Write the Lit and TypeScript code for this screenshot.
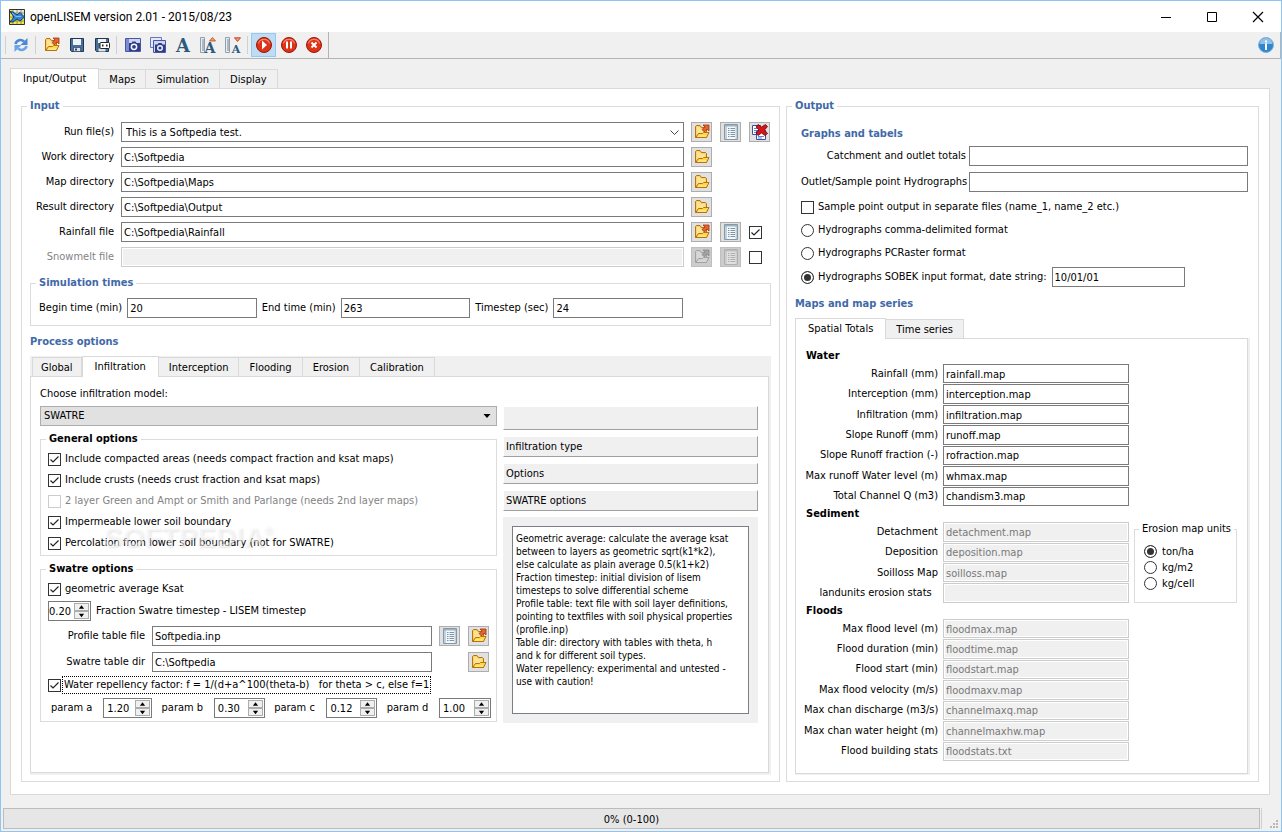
import { LitElement, html, css, svg, nothing, TemplateResult } from "lit";
import { customElement } from "lit/decorators.js";
import { classMap } from "lit/directives/class-map.js";

const folder = svg`
  <path d="M1.500 13.500v-11l1-1h3.500l1.500 2h4l1 1v9z" fill="#f5c64a" stroke="#b9720c"/>
  <path d="M2.500 3.500 3 2.500h2.500L7 4.500h4.500V9h-7l-2 2.500z" fill="#fce294"/>
  <path d="M1.800 13.500 4.500 9.500h4l1-1h5.500l-2.500 5z" fill="#ffd84a" stroke="#b9720c"/>
  <path d="M4 12h8" stroke="#fff0a8" fill="none"/>`;

const ruler = svg`
  <path d="M.500.500h4v15h-4z" fill="#e9eef2" stroke="#8fa1b0"/>
  <path d="M2 3h2M2 5h2M2 7h2M2 9h2M2 11h2M2 13h2" stroke="#6f8596"/>`;

const disc = svg`
  <circle cx="8" cy="8" r="7.500" fill="#dd3316" stroke="#9d1408"/>
  <path d="M2.500 6.500a5.600 5.200 0 0 1 11 0" fill="none" stroke="#f5876c" stroke-width="1.200"/>`;

const glyphs: Record<string, TemplateResult> = {
  app: svg`
    <rect width="16" height="16" fill="#f2e64a"/>
    <path d="M4 0h12v8H4z" fill="#e6e8e6"/>
    <path d="M0 4h16M0 8h16M0 12h16M4 0v16M8 0v16M12 0v16" stroke="#77763c" stroke-width=".7"/>
    <path d="M.500.500h15v15H.500z" fill="none" stroke="#33352c"/>
    <path d="M1 2.500 4 3l4 3 3-2.500 4.500 4.500-4.500 4-3-2-4 3H1l4-5z" fill="#2f86d6" stroke="#123c74"/>
    <path d="m3 4 4 3.500h5" fill="none" stroke="#7fbdf0"/>`,
  refresh: svg`
    <path d="M2.500 7C3.500 3 8 1.800 11 4.500" fill="none" stroke="#4b87d2" stroke-width="2.600"/>
    <path d="M14.500 1v7H7.500z" fill="#4b87d2"/>
    <path d="M13.500 9C12.500 13 8 14.200 5 11.500" fill="none" stroke="#6ba3e6" stroke-width="2.600"/>
    <path d="M1.500 15V8h7z" fill="#6ba3e6"/>`,
  folder,
  open: svg`${folder}
    <path d="M9 1h6v6l-2-2-2.500 3L8 5.500 11 3z" fill="#e8622a" stroke="#9e3510" stroke-width=".8"/>`,
  save: svg`
    <path d="M1.500 1.500h13v13h-12l-1-1z" fill="#4a6f94" stroke="#1d3855"/>
    <path d="M4 2h8v6H4z" fill="#eef3f8"/><path d="M4.500 10.500h7v4h-7z" fill="#dbe3ec" stroke="#1d3855" stroke-width=".6"/>
    <path d="M6 11.500h2v2H6z" fill="#25435f"/>`,
  saveas: svg`
    <path d="M1.500 1.500h13v13h-12l-1-1z" fill="#4a6f94" stroke="#1d3855"/>
    <path d="M4 2h8v4H4z" fill="#eef3f8"/><path d="M4.500 11.500h7v3h-7z" fill="#dbe3ec"/>
    <rect x="6" y="5.500" width="9.500" height="6" rx="1" fill="#fff" stroke="#222"/>
    <path d="M8 8.500h1.500M12 8.500h1.500" stroke="#222" stroke-width="2"/>`,
  camera: svg`
    <path d="M.500 1.500h15v13H.500z" fill="#cdd5f1" stroke="#4a56a0"/>
    <path d="M1 2h3v12H1z" fill="#7d8bd0"/>
    <path d="M4 6h2.500l1-1.500h3l1 1.500H15v8H4z" fill="#2f3c86"/>
    <circle cx="9" cy="9.800" r="3.400" fill="#f3f5ff"/><circle cx="9" cy="9.800" r="1.900" fill="#2f3c86"/>`,
  cameras: svg`
    <path d="M.500.500h11v10H.500z" fill="#e3e8fa" stroke="#6a76bb"/>
    <path d="M3.500 3.500h12v12h-12z" fill="#cdd5f1" stroke="#4a56a0"/>
    <path d="M5 7.500h2.500l1-1.500h3l1 1.500H15V15H5z" fill="#2f3c86"/>
    <circle cx="10" cy="11" r="3" fill="#f3f5ff"/><circle cx="10" cy="11" r="1.600" fill="#2f3c86"/>`,
  font: svg`<text class="letter" x="8" y="14.500" font-size="18">A</text>`,
  fontup: svg`${ruler}
    <text class="letter" x="10" y="15.500" font-size="14">A</text>
    <path d="M9.500 4 12.500.500l3 3.500z" fill="#f2a35d" stroke="#b44a12" stroke-width=".8"/>`,
  fontdown: svg`${ruler}
    <text class="letter" x="11" y="15.500" font-size="11">A</text>
    <path d="M9.500.800h6L12.500 4.500z" fill="#f2a35d" stroke="#b4241a" stroke-width=".8"/>`,
  play: svg`${disc}<path d="M6 3.500 11 8l-5 4.500z" fill="#fff"/>`,
  pause: svg`${disc}<path d="M6 4.500v7M10 4.500v7" stroke="#fff" stroke-width="2"/>`,
  stop: svg`${disc}<path d="m5.500 5.500 5 5m0-5-5 5" stroke="#fff" stroke-width="2"/>`,
  info: svg`<circle cx="8" cy="8" r="7.500" fill="#2f86cc" stroke="#7fb4de"/><path d="M1.500 7a6.500 6 0 0 1 13 0z" fill="#8fc1e8"/><path d="M8 3.500v2M8 6.500V13" stroke="#fff" stroke-width="2"/>`,
  list: svg`
    <path d="M1.500.500h13v15h-13z" fill="#f4f8fb" stroke="#8499a8"/><path d="M2 1h2v14H2zM12.500 1H14v14h-1.500z" fill="#c3d0da"/><path d="M2 1h12v1.500H2z" fill="#9fb3c2"/>
    <path d="M5 4.500h1.500M5 6.500h1.500M5 8.500h1.500M5 10.500h1.500M5 12.500h1.500M7.500 4.500h4.500M7.500 6.500h4.500M7.500 8.500h4.500M7.500 10.500h4.500M7.500 12.500h4.500" stroke="#7d95a6"/>`,
  remove: svg`
    <path d="M.500 1.500h8v9h-8z" fill="#fff" stroke="#3c4ea5"/><path d="M4.500 6.500h9v9h-9z" fill="#fff" stroke="#3c4ea5"/>
    <path d="M6 12.500h6M6 14h4M2 4.500h3M2 6.500h2M2 8.500h2" stroke="#6f82c4"/>
    <path d="m6 .500 3.500 2.500L13.500.500l2 2-3 3.500 3 3.500-2.500 2L9.500 9 6 11.500 4 9l3-3-3-3z" fill="#d8141a" stroke="#5f0508" stroke-width=".8"/>`,
  minimize: svg`<path d="M3 8.500h10" stroke="#000"/>`,
  maximize: svg`<path d="M3.500 3.500h9v9h-9z" fill="none" stroke="#000"/>`,
  close: svg`<path d="m3 3 10 10m0-10L3 13" stroke="#000" stroke-width="1.200"/>`,
  up: svg`<path d="M8 3 14 11H2z"/>`,
  down: svg`<path d="M2 4h12L8 12z"/>`,
};

const icon = (name: string) =>
  html`<svg class="icon" viewBox="0 0 16 16" aria-hidden="true">${glyphs[name]}</svg>`;

interface FileRow {
  label: string;
  value: string;
  icons: string[];
  check?: boolean;
  disabled?: boolean;
}

const fileRows: FileRow[] = [
  { label: "Work directory", value: "C:\\Softpedia", icons: ["folder"] },
  { label: "Map directory", value: "C:\\Softpedia\\Maps", icons: ["folder"] },
  { label: "Result directory", value: "C:\\Softpedia\\Output", icons: ["folder"] },
  { label: "Rainfall file", value: "C:\\Softpedia\\Rainfall", icons: ["open", "list"], check: true },
  { label: "Snowmelt file", value: "", icons: ["open", "list"], check: false, disabled: true },
];

const mapSections = [
  {
    title: "Water",
    disabled: false,
    rows: [
      ["Rainfall (mm)", "rainfall.map"],
      ["Interception (mm)", "interception.map"],
      ["Infiltration (mm)", "infiltration.map"],
      ["Slope Runoff (mm)", "runoff.map"],
      ["Slope Runoff fraction (-)", "rofraction.map"],
      ["Max runoff Water level (m)", "whmax.map"],
      ["Total Channel Q (m3)", "chandism3.map"],
    ],
  },
  {
    title: "Sediment",
    disabled: true,
    rows: [
      ["Detachment", "detachment.map"],
      ["Deposition", "deposition.map"],
      ["Soilloss Map", "soilloss.map"],
      ["landunits erosion stats\u00a0\u00a0", ""],
    ],
  },
  {
    title: "Floods",
    disabled: true,
    rows: [
      ["Max flood level (m)", "floodmax.map"],
      ["Flood duration (min)", "floodtime.map"],
      ["Flood start (min)", "floodstart.map"],
      ["Max flood velocity (m/s)", "floodmaxv.map"],
      ["Max chan discharge (m3/s)", "channelmaxq.map"],
      ["Max chan water height (m)", "channelmaxhw.map"],
      ["Flood building stats", "floodstats.txt"],
    ],
  },
];

const helpText = `Geometric average: calculate the average ksat
between to layers as geometric sqrt(k1*k2),
else calculate as plain average 0.5(k1+k2)
Fraction timestep: initial division of lisem
timesteps to solve differential scheme
Profile table: text file with soil layer definitions,
pointing to textfiles with soil physical properties
(profile.inp)
Table dir: directory with tables with theta, h
and k for different soil types.
Water repellency: experimental and untested -
use with caution!`;

@customElement("app-root")
export class AppRoot extends LitElement {
  static styles = css`
    :host {
      display: block;
      font: 11px/14px "DejaVu Sans Condensed", "DejaVu Sans", sans-serif;
      color: #000;
    }
    * { box-sizing: border-box; }
    .window {
      display: flex;
      flex-direction: column;
      min-height: 100vh;
      border: 1px solid #8ec5f2;
      background: #f0f0f0;
    }
    button, input, select, textarea { font: inherit; color: inherit; margin: 0; border-radius: 0; }
    button { padding: 0; }
    .icon { display: block; width: 16px; height: 16px; overflow: visible; }
    .letter { font-family: "DejaVu Serif", serif; font-weight: bold; fill: #2d5a7c; text-anchor: middle; }

    .titlebar { display: flex; align-items: center; height: 31px; padding-left: 8px; background: #fff; }
    .titlebar h1 { flex: 1; margin: 0 0 0 5px; font: 12px/16px Roboto, sans-serif; }
    .caption { display: flex; align-items: center; justify-content: center; width: 46px; height: 28px; border: 0; background: none; }

    .toolbar { display: flex; align-items: center; height: 27px; border-bottom: 1px solid #b4b4b4; border-right: 1px solid #b4b4b4; }
    .tools { display: flex; align-items: center; align-self: stretch; padding: 0 2px 0 4px; border-right: 1px solid #b4b4b4; }
    .sep { width: 1px; height: 18px; margin: 0 3px 0 2px; background: #d0d0d0; }
    .handle { margin: 0 2px 0 0; }
    .tool { display: flex; align-items: center; justify-content: center; width: 25px; height: 24px; border: 1px solid transparent; background: none; }
    .tool.on { border-color: #90c8f6; background: #c0dcf3; }
    .help { margin: 0 2px 0 auto; }

    .tabs { display: flex; align-items: flex-end; }
    .tab {
      height: 19px; padding: 2px 10px 0; border: 1px solid #d9d9d9; border-left-width: 0; border-bottom: 0;
      background: #f0f0f0; white-space: nowrap;
    }
    .tab:first-child { border-left-width: 1px; }
    .tab.on { height: 21px; margin-bottom: -1px; padding: 0 12px; background: #fff; border-left-width: 1px; position: relative; }
    .pane { border: 1px solid #d9d9d9; background: #fff; }

    .main { flex: 1; display: flex; flex-direction: column; padding: 9px 11px 13px 9px; }
    .main > .pane { flex: 1; display: grid; grid-template-columns: minmax(0, 759fr) minmax(0, 473fr); gap: 6px; padding: 10px 10px 12px; }

    fieldset { min-width: 0; margin: 0; border: 1px solid #dcdcdc; padding: 9px 8px 6px; }
    legend { padding: 0 3px; font-weight: bold; }
    .section > legend, .blue { color: #4169a8; }
    .section { display: flex; flex-direction: column; }
    .section > legend { margin-left: -3px; }
    h2, h3 { margin: 0; font-size: 11px; line-height: 14px; font-weight: bold; }

    input[type="text"], input[type="number"] {
      width: 100%; min-width: 0; height: 20px; padding: 1px 2px 0; border: 1px solid #7a7a7a; background: #fff; outline: 0;
    }
    input:disabled { border-color: #ccc; background: #f0f0f0; box-shadow: inset 0 0 0 1px #fff; color: #787878; }
    .dim { color: #838383; }

    input[type="checkbox"], input[type="radio"] {
      appearance: none; flex: none; width: 13px; height: 13px; border: 1px solid #333; background: #fff;
    }
    input[type="checkbox"]:checked {
      background: #fff url("data:image/svg+xml,%3Csvg xmlns='http://www.w3.org/2000/svg' viewBox='0 0 11 11'%3E%3Cpath d='M1.500 5.500 4 8l5.500-5.500' fill='none' stroke='%23222' stroke-width='1.200'/%3E%3C/svg%3E");
    }
    input[type="checkbox"]:disabled { border-color: #ccc; background: #fff; }
    input[type="radio"] { border-radius: 50%; }
    input[type="radio"]:checked { background: #333; box-shadow: inset 0 0 0 2px #fff; }
    .choice { display: flex; align-items: center; gap: 4px; white-space: nowrap; }

    .files { display: grid; grid-template-columns: 84px 1fr 80px; gap: 5px 7px; align-items: center; }
    .files label { text-align: right; }
    .buttons { display: flex; align-items: center; gap: 8px; }
    .mini { display: flex; align-items: center; justify-content: center; flex: none; width: 21px; height: 20px; border: 1px solid #adadad; background: #e1e1e1; }
    .mini:disabled { border-color: #bfbfbf; background: #ccc; }
    .mini:disabled .icon { filter: grayscale(1); opacity: 0.5; }

    select { appearance: none; width: 100%; height: 20px; outline: 0; }
    .combo {
      padding: 1px 4px 0; border: 1px solid #7a7a7a;
      background: #fff url("data:image/svg+xml,%3Csvg xmlns='http://www.w3.org/2000/svg' viewBox='0 0 9 9'%3E%3Cpath d='m.500 2.500 4 4 4-4' fill='none' stroke='%23444'/%3E%3C/svg%3E") no-repeat right 4px center / 9px 9px;
    }
    .drop {
      padding: 0 3px; border: 1px solid #adadad;
      background: #e1e1e1 url("data:image/svg+xml,%3Csvg xmlns='http://www.w3.org/2000/svg' viewBox='0 0 8 8'%3E%3Cpath d='M.500 2h7L4 6z'/%3E%3C/svg%3E") no-repeat right 5px center / 8px 8px;
    }

    .times { margin-top: 9px; padding: 8px 87px 7px 8px; }
    .times > legend { margin-left: -3px; }
    .times-row { display: grid; grid-template-columns: auto 1fr auto 1fr auto 1fr; gap: 5px; align-items: center; white-space: nowrap; }
    .process-title { margin: 9px 0 7px; }
    .tabbox { flex: 1; display: flex; flex-direction: column; }
    .process { padding: 0 2px 2px 0; background: #f0f0f0; }
    .process .tabs { padding-left: 2px; }
    .process .tab:first-child { padding: 2px 8px 0; }
    .tabbox > .pane { flex: 1; }
    .process > .pane { display: grid; grid-template-columns: minmax(0, 457fr) minmax(0, 255fr); align-content: start; gap: 6px; padding: 10px 10px 10px 9px; }
    .model-label { grid-column: 1 / -1; height: 13px; }
    .options { position: relative; display: flex; flex-direction: column; gap: 6px; }
    .options > fieldset { padding: 6px 7px 5px; }
    .options > .last { padding-bottom: 3px; }
    .options > fieldset > legend { margin-left: -2px; }
    .checks { display: flex; flex-direction: column; gap: 7px; }
    .checks .choice { height: 14px; }
    .watermark {
      position: absolute; left: 64px; top: 116px; pointer-events: none;
      font: bold 28px/32px "Liberation Sans", sans-serif; color: rgba(255, 255, 255, 0.5);
      text-shadow: 1px 1px 2px rgba(0, 0, 0, 0.1);
    }
    .watermark sup { font-size: 12px; line-height: 12px; vertical-align: 12px; }
    .swatre { display: flex; flex-direction: column; gap: 5px; }
    .fraction { display: flex; align-items: center; gap: 5px; }
    .tables { display: grid; grid-template-columns: 97px 1fr 50px; gap: 6px 7px; align-items: center; text-align: right; }
    .tables .buttons { justify-content: flex-end; }
    .focus { padding: 1px; outline: 1px dotted #000; }
    .repel { gap: 2px; }
    .params { display: grid; grid-template-columns: 43px 49px 43px 51px 43px 51px 43px 52px; justify-content: space-between; align-items: center; margin-right: -2px; padding-left: 3px; white-space: nowrap; }
    .spin { display: flex; height: 20px; border: 1px solid #7a7a7a; padding-right: 1px; background: #fff; }
    .spin input[type="number"] { appearance: textfield; flex: 1; height: 18px; padding: 1px 0 0 3px; border: 0; }
    .spin input::-webkit-inner-spin-button { appearance: none; display: none; }
    .fraction .spin { width: 43px; }
    .fraction .spin input[type="number"] { padding-left: 0; }
    .steps { display: flex; flex-direction: column; padding: 1px 0; }
    .step { display: flex; align-items: center; justify-content: center; width: 15px; height: 8px; border: 1px solid #acacac; background: #f0f0f0; }
    .step .icon { width: 7px; height: 7px; }

    .side { display: flex; flex-direction: column; gap: 6px; }
    .bar { height: 21px; padding: 3px 2px; border: 1px solid #a0a0a0; border-top-color: #fff; border-left-color: #fff; background: #f0f0f0; }
    .bar.blank { height: 24px; }
    .note { flex: 1; display: flex; padding: 9px; background: #f0f0f0; }
    textarea { flex: 1; min-width: 0; min-height: 188px; padding: 5px 3px; border: 1px solid #7a7f87; background: #fff; font-size: 10px; line-height: 13px; white-space: pre; overflow: hidden; resize: none; outline: 0; }

    .graphs { display: flex; flex-direction: column; gap: 9px; padding: 5px 2px 0 6px; }
    .graph-rows { display: grid; grid-template-columns: 165px 1fr; gap: 6px 3px; align-items: center; text-align: right; white-space: nowrap; margin-top: -4px; }
    .graph-opts { display: flex; flex-direction: column; gap: 9px; margin-top: -1px; }
    .graphs .choice { gap: 4px; }
    .date { display: flex; align-items: center; gap: 5px; height: 20px; margin-top: -2px; }
    .date input[type="text"] { width: 133px; }
    .maps-title { margin: 10px 0 7px; }
    .totals { padding: 0 2px 1px 0; background: linear-gradient(#fff 20px, #f0f0f0 20px); }
    .totals > .pane {
      display: grid; grid-template-columns: 134px 1fr 103px; gap: 1px 5px; padding: 10px 10px 12px 8px;
      grid-template-rows: 14px repeat(7, minmax(19px, 1fr)) 14px repeat(4, minmax(19px, 1fr)) 14px repeat(7, minmax(19px, 1fr));
      align-items: center;
    }
    .totals h3 { grid-column: 1 / -1; padding-left: 2px; }
    .totals label.name { grid-column: 1; text-align: right; white-space: nowrap; }
    .totals input[type="text"] { grid-column: 2; height: 100%; }
    .units { grid-column: 3; grid-row: 10 / span 4; align-self: stretch; display: flex; flex-direction: column; gap: 3px; padding: 9px 9px 0; }
    .units legend { margin-left: -5px; font-weight: normal; white-space: nowrap; }
    .units .choice { height: 13px; gap: 5px; }

    .status { display: flex; gap: 1px; height: 23px; padding: 0 2px 2px; }
    .progress { flex: 1; border: 1px solid #bcbcbc; background: #e6e6e6; text-align: center; line-height: 21px; }
    .grip { width: 18px; border-left: 1px solid #d0d0d0; display: flex; align-items: flex-end; justify-content: flex-end; }
    .grip svg { width: 9px; height: 9px; }
  `;

  private tabs(names: string[], active: string) {
    return html`<div class="tabs" role="tablist">
      ${names.map(
        (n) => html`<button class=${classMap({ tab: true, on: n === active })} role="tab" aria-selected=${n === active}>${n}</button>`
      )}
    </div>`;
  }

  private mini(name: string, label: string, disabled = false) {
    return html`<button class="mini" aria-label=${label} ?disabled=${disabled}>${icon(name)}</button>`;
  }

  private check(label: string, checked = true, disabled = false) {
    return html`<label class=${classMap({ choice: true, dim: disabled })}>
      <input type="checkbox" .checked=${checked} ?disabled=${disabled} />${label}</label>`;
  }

  private radio(group: string, label: string, checked = false) {
    return html`<label class="choice"><input type="radio" name=${group} .checked=${checked} />${label}</label>`;
  }

  private spin(id: string, value: string) {
    return html`<span class="spin">
      <input id=${id} type="number" step="0.01" value=${value} />
      <span class="steps">
        <button class="step" aria-label="Increase">${icon("up")}</button>
        <button class="step" aria-label="Decrease">${icon("down")}</button>
      </span>
    </span>`;
  }

  private tool(name: string, on = false) {
    return html`<button class=${classMap({ tool: true, on })} aria-label=${name}>${icon(name)}</button>`;
  }

  private renderInput() {
    return html`<fieldset class="section">
      <legend>Input</legend>
      <div class="files">
        <label for="run">Run file(s)</label>
        <select id="run" class="combo"><option>This is a Softpedia test.</option></select>
        <div class="buttons">${this.mini("open", "Open run file")}${this.mini("list", "View run file")}${this.mini("remove", "Clear run files")}</div>
        ${fileRows.map(
          (r, i) => html`
            <label for="file${i}" class=${classMap({ dim: !!r.disabled })}>${r.label}</label>
            <input id="file${i}" type="text" .value=${r.value} ?disabled=${!!r.disabled} />
            <div class="buttons">
              ${r.icons.map((n) => this.mini(n, `${r.label} ${n}`, !!r.disabled))}
              ${r.check === undefined ? nothing : html`<input type="checkbox" aria-label="Use ${r.label}" .checked=${r.check} />`}
            </div>`
        )}
      </div>
      <fieldset class="times">
        <legend class="blue">Simulation times</legend>
        <div class="times-row">
          <label for="begin">Begin time (min)</label><input id="begin" type="text" .value=${"20"} />
          <label for="end">End time (min)</label><input id="end" type="text" .value=${"263"} />
          <label for="step">Timestep (sec)</label><input id="step" type="text" .value=${"24"} />
        </div>
      </fieldset>
      <h2 class="blue process-title">Process options</h2>
      <div class="tabbox process">
        ${this.tabs(["Global", "Infiltration", "Interception", "Flooding", "Erosion", "Calibration"], "Infiltration")}
        <div class="pane">
          <label class="model-label" for="model">Choose infiltration model:</label>
          <div class="options">
            <select id="model" class="drop"><option>SWATRE</option></select>
            <fieldset>
              <legend>General options</legend>
              <div class="checks">
                ${this.check("Include compacted areas (needs compact fraction and ksat maps)")}
                ${this.check("Include crusts (needs crust fraction and ksat maps)")}
                ${this.check("2 layer Green and Ampt or Smith and Parlange (needs 2nd layer maps)", false, true)}
                ${this.check("Impermeable lower soil boundary")}
                ${this.check("Percolation from lower soil boundary (not for SWATRE)")}
              </div>
            </fieldset>
            <fieldset class="last">
              <legend>Swatre options</legend>
              <div class="swatre">
                ${this.check("geometric average Ksat")}
                <div class="fraction">${this.spin("fraction", "0.20")}<label for="fraction">Fraction Swatre timestep - LISEM timestep</label></div>
                <div class="tables">
                  <label for="profile">Profile table file</label><input id="profile" type="text" .value=${"Softpedia.inp"} />
                  <div class="buttons">${this.mini("list", "View profile table")}${this.mini("open", "Open profile table")}</div>
                  <label for="dir">Swatre table dir</label><input id="dir" type="text" .value=${"C:\\Softpedia"} />
                  <div class="buttons">${this.mini("folder", "Choose table directory")}</div>
                </div>
                <label class="choice repel">
                  <input type="checkbox" .checked=${true} />
                  <span class="focus">Water repellency factor: f = 1/(d+a^100(theta-b) &nbsp; for theta &gt; c, else f=1</span>
                </label>
                <div class="params">
                  <label for="pa">param a</label>${this.spin("pa", "1.20")}
                  <label for="pb">param b</label>${this.spin("pb", "0.30")}
                  <label for="pc">param c</label>${this.spin("pc", "0.12")}
                  <label for="pd">param d</label>${this.spin("pd", "1.00")}
                </div>
              </div>
            </fieldset>
            <div class="watermark">SOFTPEDIA<sup>®</sup></div>
          </div>
          <div class="side">
            <div class="bar blank"></div>
            <div class="bar">Infiltration type</div>
            <div class="bar">Options</div>
            <div class="bar">SWATRE options</div>
            <div class="note"><textarea readonly aria-label="Option help" .value=${helpText}></textarea></div>
          </div>
        </div>
      </div>
    </fieldset>`;
  }

  private renderOutput() {
    return html`<fieldset class="section">
      <legend>Output</legend>
      <div class="graphs">
        <h2 class="blue">Graphs and tabels</h2>
        <div class="graph-rows">
          <label for="totals">Catchment and outlet totals</label><input id="totals" type="text" />
          <label for="hydro">Outlet/Sample point Hydrographs</label><input id="hydro" type="text" />
        </div>
        <div class="graph-opts">
          ${this.check("Sample point output in separate files (name_1, name_2 etc.)", false)}
          ${this.radio("format", "Hydrographs comma-delimited format")}
          ${this.radio("format", "Hydrographs PCRaster format")}
          <div class="date">
            ${this.radio("format", "Hydrographs SOBEK input format, date string:", true)}
            <input type="text" aria-label="Date string" .value=${"10/01/01"} />
          </div>
        </div>
      </div>
      <h2 class="blue maps-title">Maps and map series</h2>
      <div class="tabbox totals">
        ${this.tabs(["Spatial Totals", "Time series"], "Spatial Totals")}
        <div class="pane">
          ${mapSections.map(
            (s) => html`<h3>${s.title}</h3>
              ${s.rows.map(
                ([label, value], i) => html`
                  <label class="name" for="${s.title}${i}">${label}</label>
                  <input id="${s.title}${i}" type="text" .value=${value} ?disabled=${s.disabled} />`
              )}`
          )}
          <fieldset class="units">
            <legend>Erosion map units</legend>
            ${this.radio("units", "ton/ha", true)}${this.radio("units", "kg/m2")}${this.radio("units", "kg/cell")}
          </fieldset>
        </div>
      </div>
    </fieldset>`;
  }

  render() {
    return html`<div class="window">
      <header class="titlebar">
        ${icon("app")}
        <h1>openLISEM version 2.01 - 2015/08/23</h1>
        ${["minimize", "maximize", "close"].map((n) => html`<button class="caption" aria-label=${n}>${icon(n)}</button>`)}
      </header>
      <div class="toolbar">
        <div class="tools">
          <span class="sep handle"></span>${this.tool("refresh")}<span class="sep"></span>
          ${["open", "save", "saveas"].map((n) => this.tool(n))}<span class="sep"></span>
          ${["camera", "cameras", "font", "fontup", "fontdown"].map((n) => this.tool(n))}<span class="sep"></span>
          ${this.tool("play", true)}${this.tool("pause")}${this.tool("stop")}
        </div>
        <button class="tool help" aria-label="About">${icon("info")}</button>
      </div>
      <main class="main">
        ${this.tabs(["Input/Output", "Maps", "Simulation", "Display"], "Input/Output")}
        <div class="pane">${this.renderInput()}${this.renderOutput()}</div>
      </main>
      <footer class="status">
        <div class="progress" role="progressbar" aria-valuenow="0" aria-valuemin="0" aria-valuemax="100">0% (0-100)</div>
        <div class="grip">
          <svg viewBox="0 0 9 9" aria-hidden="true"><path d="M6 0h2v2H6zM3 3h2v2H3zM6 3h2v2H6zM0 6h2v2H0zM3 6h2v2H3zM6 6h2v2H6z" fill="#b8b8b8" /></svg>
        </div>
      </footer>
    </div>`;
  }
}
